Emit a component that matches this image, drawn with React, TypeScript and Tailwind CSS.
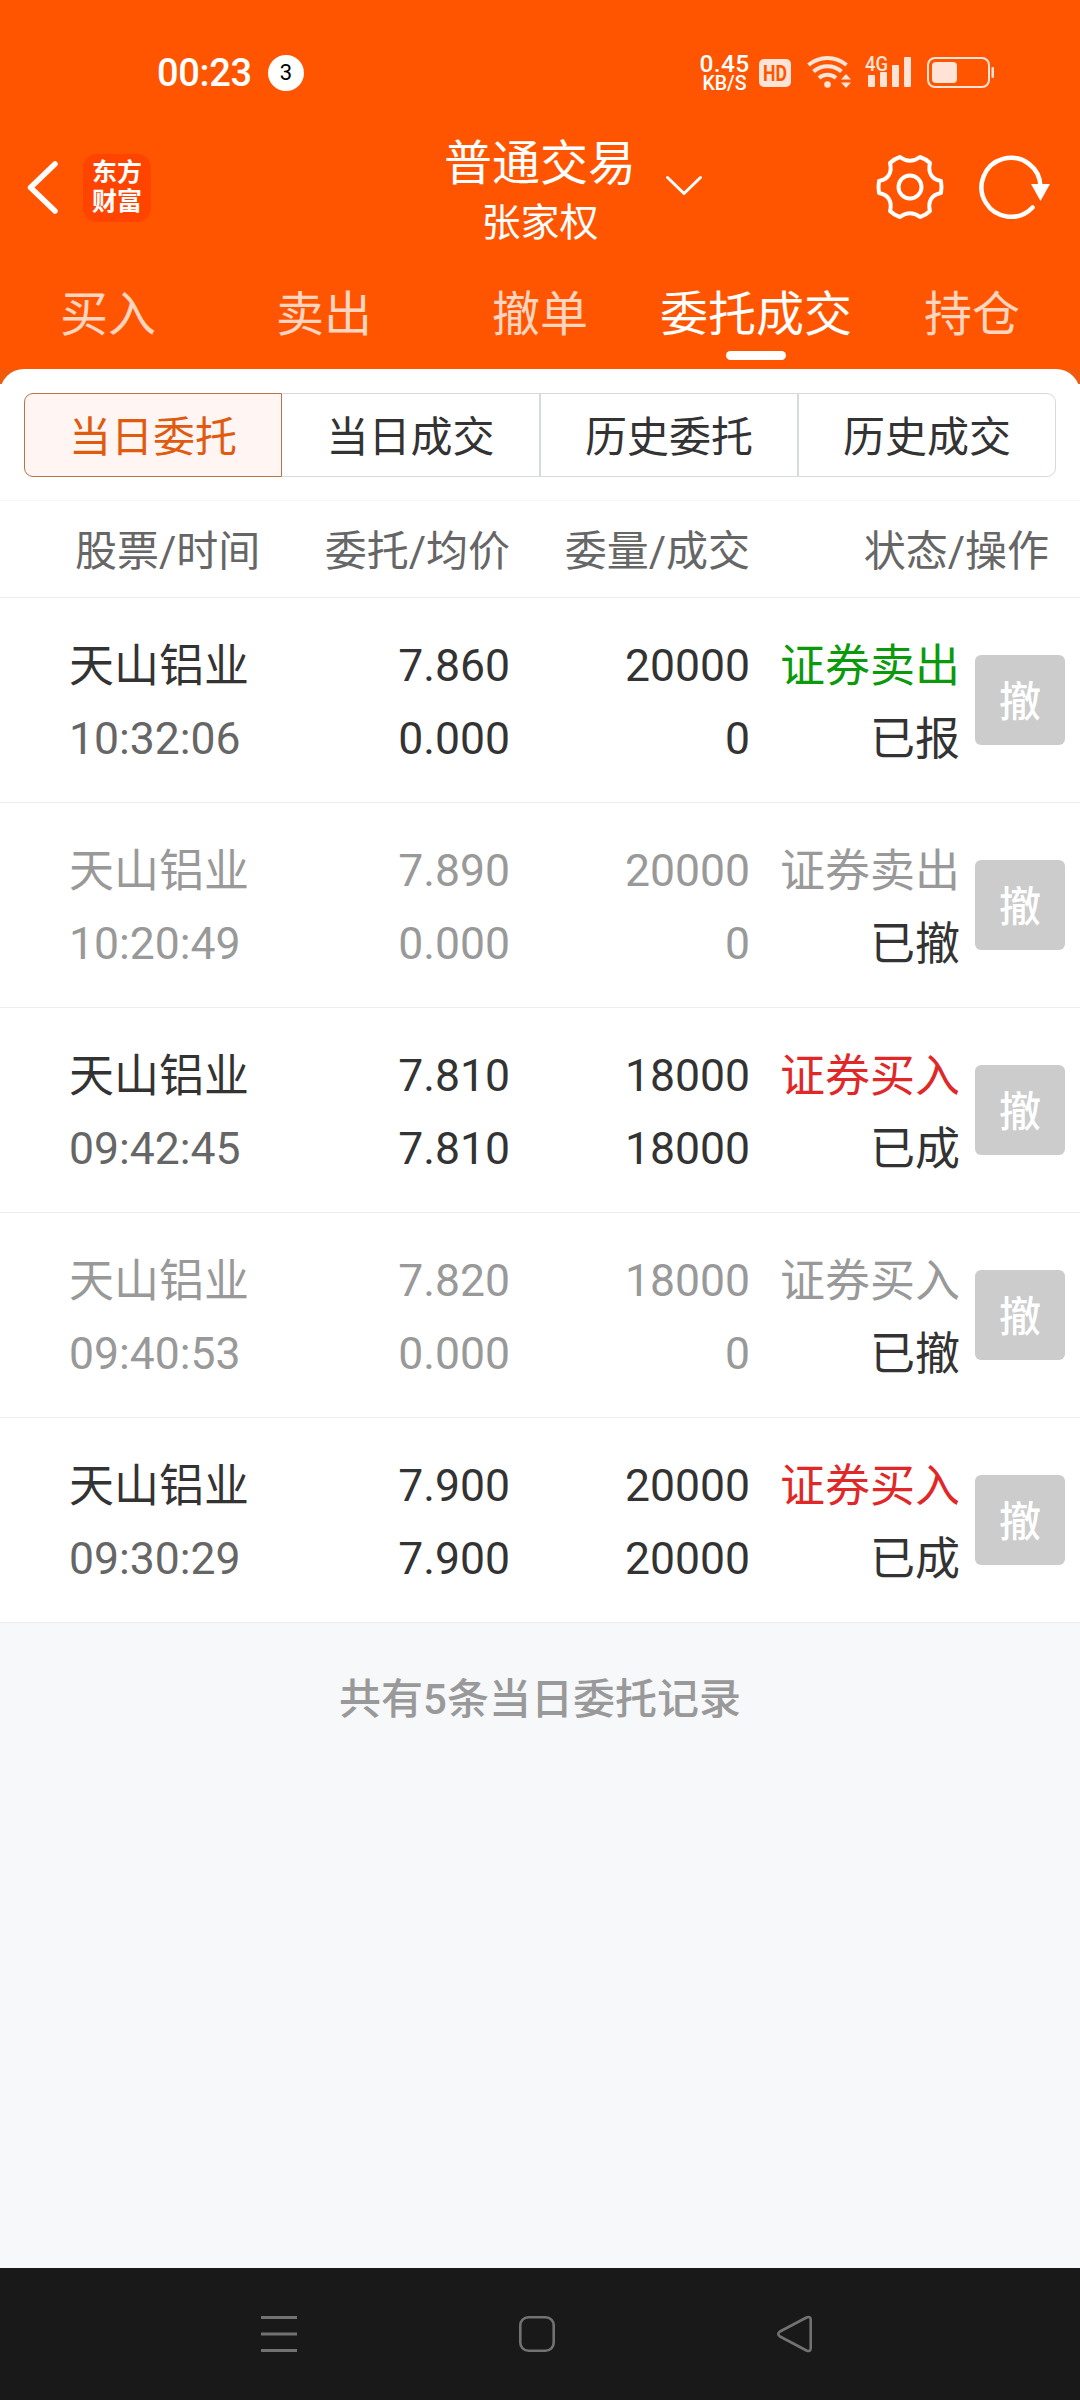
import clsx from 'clsx';

type Order = {
  name: string;
  time: string;
  price: string;
  avg: string;
  amount: string;
  filled: string;
  side: string;
  status: string;
};

const orders: Order[] = [
  { name: '天山铝业', time: '10:32:06', price: '7.860', avg: '0.000', amount: '20000', filled: '0', side: '证券卖出', status: '已报' },
  { name: '天山铝业', time: '10:20:49', price: '7.890', avg: '0.000', amount: '20000', filled: '0', side: '证券卖出', status: '已撤' },
  { name: '天山铝业', time: '09:42:45', price: '7.810', avg: '7.810', amount: '18000', filled: '18000', side: '证券买入', status: '已成' },
  { name: '天山铝业', time: '09:40:53', price: '7.820', avg: '0.000', amount: '18000', filled: '0', side: '证券买入', status: '已撤' },
  { name: '天山铝业', time: '09:30:29', price: '7.900', avg: '7.900', amount: '20000', filled: '20000', side: '证券买入', status: '已成' },
];

const tabs = ['买入', '卖出', '撤单', '委托成交', '持仓'];
const segments = ['当日委托', '当日成交', '历史委托', '历史成交'];

function StatusBar() {
  return (
    <div className="flex h-[130px] items-start justify-between pl-[157px] pr-[82px] pt-[54px]">
      <div className="flex items-center gap-[16px]">
        <span className="text-[38px] leading-[38px] font-medium tracking-[-0.3px]">00:23</span>
        <span className="flex size-[36px] items-center justify-center rounded-full bg-white text-[22px] leading-none text-black">3</span>
      </div>
      <div className="flex items-start">
        <div className="-mt-px flex w-[51px] flex-col items-center font-medium">
          <span className="text-[24.5px] leading-[22px] tracking-[0.3px]">0.45</span>
          <span className="text-[19.5px] leading-[17px]">KB/S</span>
        </div>
        <svg className="-mt-px ml-[2px] h-[40px] w-[246px]" viewBox="0 0 246 40" fill="#ffe3d6">
          {/* HD */}
          <rect x="7" y="6" width="32" height="28" rx="5" />
          <text x="23" y="28" fontSize="22" fontWeight="700" fill="#ff5500" textAnchor="middle" textLength="24" lengthAdjust="spacingAndGlyphs">HD</text>
          {/* wifi */}
          <g fill="none" stroke="#ffe3d6" strokeWidth="4">
            <path d="M56.500 12a29 29 0 0 1 38 0" />
            <path d="M61.500 18.500a21 21 0 0 1 28 0" />
            <path d="M67 25a13 13 0 0 1 17 0" />
          </g>
          <circle cx="75.500" cy="31.500" r="3.300" />
          <path d="M89 26.500l5-5.500 5 5.500zM89 29.500l5 5.500 5-5.500z" />
          {/* signal */}
          <text x="113" y="17.500" fontSize="21" fontWeight="500" textLength="23" lengthAdjust="spacingAndGlyphs">4G</text>
          <rect x="116" y="22" width="7" height="12" rx="1" />
          <rect x="128" y="19" width="7" height="15" rx="1" />
          <rect x="140" y="12" width="7" height="22" rx="1" />
          <rect x="152" y="4" width="7" height="30" rx="1" />
          {/* battery */}
          <rect x="176" y="5" width="61" height="29" rx="7" fill="none" stroke="#ffe3d6" strokeWidth="2" />
          <rect x="180" y="9" width="25" height="21" rx="4" />
          <rect x="239.500" y="14" width="2.500" height="11" rx="1" />
        </svg>
      </div>
    </div>
  );
}

function TitleBar() {
  return (
    <div className="grid h-[124px] grid-cols-[390px_300px_390px]">
      <div className="flex items-start pl-[26px]">
        <svg className="mt-[30px] h-[55px] w-[34px]" viewBox="0 0 34 55" fill="none" stroke="#fff" strokeWidth="5.500" strokeLinecap="round" strokeLinejoin="round">
          <path d="M29 4L4.500 27.500L29 51" />
        </svg>
        <div className="ml-[23px] mt-[24px] flex size-[68px] flex-col items-center justify-center rounded-[14px] bg-[#ff4400] pb-[6px] font-['Noto_Sans_CJK_SC'] text-[25px] leading-[29px] font-bold">
          <span>东方</span>
          <span>财富</span>
        </div>
      </div>
      <div className="flex flex-col items-center pt-px">
        <span className="text-[48px] leading-[65px]">普通交易</span>
        <span className="text-[39px] leading-[54px]">张家权</span>
      </div>
      <div className="flex items-start">
        <svg className="-ml-[26px] mt-[44px] h-[22px] w-[40px]" viewBox="0 0 40 22" fill="none" stroke="#fff" strokeWidth="3" strokeLinecap="round" strokeLinejoin="round">
          <path d="M3.500 3.500L20 19.500L36.500 3.500" />
        </svg>
        <svg className="ml-[170px] mt-[22px] h-[70px] w-[72px]" viewBox="-36 -35 72 70" fill="none" stroke="#fff" strokeWidth="4" strokeLinejoin="round">
          <circle r="11.500" />
          <path d="M-10 -30Q0 -22.500 10 -30Q16 -28 20 -24C17.500 -14 22 -7.500 31 -6Q32 0 31 6C22 7.500 17.500 14 20 24Q16 28 10 30Q0 22.500 -10 30Q-16 28 -20 24C-17.500 14 -22 7.500 -31 6Q-32 0 -31 -6C-22 -7.500 -17.500 -14 -20 -24Q-16 -28 -10 -30Z" />
        </svg>
        <svg className="ml-[29px] mt-[22px] h-[70px] w-[76px]" viewBox="-36 -35 76 70">
          <path d="M21.500 20.500A29.500 29.500 0 1 1 29.500 0" fill="none" stroke="#fff" strokeWidth="4.500" strokeLinecap="round" />
          <path d="M20 -3H39L29.500 14Z" fill="#fff" />
        </svg>
      </div>
    </div>
  );
}

function Tabs() {
  return (
    <div className="grid h-[115px] grid-cols-5 pt-[26px]">
      {tabs.map((tab) => {
        const active = tab === '委托成交';
        return (
          <div key={tab} className={clsx('flex flex-col items-center', active ? 'text-white' : 'text-[#ffd5c0]')}>
            <span className="text-[48px] leading-[70px] whitespace-nowrap">{tab}</span>
            {active && <span className="mt-px h-[9px] w-[60px] rounded-full bg-white" />}
          </div>
        );
      })}
    </div>
  );
}

function Segments() {
  return (
    <div className="mx-[24px] grid h-[84px] grid-cols-4">
      {segments.map((label, i) => (
        <div
          key={label}
          className={clsx(
            'flex items-center justify-center border pt-[5px] text-[42px] leading-none',
            i === 0 ? 'rounded-l-[9px] border-[#b87444] bg-[#fff6f3] text-[#e05a10]' : 'border-[#d6dada] text-[#333333]',
            i === 1 && 'border-l-0',
            i === segments.length - 1 && 'rounded-r-[9px]',
          )}
        >
          {label}
        </div>
      ))}
    </div>
  );
}

const columns = 'grid grid-cols-[270px_240px_240px_210px_120px]';

function OrderRow({ order }: { order: Order }) {
  const cancelled = order.status === '已撤';
  const sideColor = order.side === '证券卖出' ? 'text-[#0b9a0b]' : 'text-[#e02828]';
  return (
    <div className={clsx(columns, 'h-[205px] border-b border-[#ededed] pt-[32px] text-[45px] leading-[73px]', cancelled ? 'text-[#999999]' : 'text-[#333333]')}>
      <div className="pl-[69px]">
        <div>{order.name}</div>
        <div className={clsx('text-[44.5px]', !cancelled && 'text-[#666666]')}>{order.time}</div>
      </div>
      <div className="text-right text-[44.5px]">
        <div>{order.price}</div>
        <div>{order.avg}</div>
      </div>
      <div className="text-right text-[44.5px]">
        <div>{order.amount}</div>
        <div>{order.filled}</div>
      </div>
      <div className="text-right">
        <div className={clsx(!cancelled && sideColor)}>{order.side}</div>
        <div className="text-[#333333]">{order.status}</div>
      </div>
      <div className="pl-[15px] pt-[25px]">
        <button className="flex size-[90px] items-center justify-center rounded-[6px] bg-[#cccccc] pt-[5px] text-[42px] leading-none font-medium text-white">撤</button>
      </div>
    </div>
  );
}

function NavBar() {
  return (
    <div className="flex h-[132px] items-start justify-between bg-[#191919] pl-[259px] pr-[265px] pt-[46px]">
      <svg className="size-[40px]" viewBox="0 0 40 40" stroke="#727272" strokeWidth="3">
        <path d="M2 3.500H38M2 20H38M2 36.500H38" />
      </svg>
      <svg className="size-[40px]" viewBox="0 0 40 40" fill="none" stroke="#727272" strokeWidth="2.600">
        <rect x="3.300" y="3.300" width="33.400" height="33.400" rx="8" />
      </svg>
      <svg className="size-[40px]" viewBox="0 0 40 40" fill="none" stroke="#727272" strokeWidth="2.600" strokeLinejoin="round">
        <path d="M5 17.500L31.500 3.500Q35.500 2 35.700 5.500V34.500Q35.500 38 31.500 36.500L5 22.500Q1.500 20 5 17.500Z" />
      </svg>
    </div>
  );
}

export default function App() {
  return (
    <div className="flex h-[2400px] w-[1080px] flex-col bg-[#f7f8fa] font-['Roboto','Noto_Sans_CJK_SC',sans-serif]">
      <header className="h-[369px] bg-[#ff5500] text-white">
        <StatusBar />
        <TitleBar />
        <Tabs />
      </header>
      <main className="flex-1">
        <div className="bg-linear-to-b from-[#f05a0a] from-[15px] to-white to-[15px]">
          <section className="rounded-t-[24px] bg-white pt-[24px]">
            <Segments />
            <div className={clsx(columns, 'mt-[23px] h-[98px] border-y border-t-[#f7f7f7] border-b-[#ededed] text-[42px] leading-[101px] text-[#666666]')}>
              <div className="pl-[75px]">股票/时间</div>
              <div className="text-right">委托/均价</div>
              <div className="text-right">委量/成交</div>
              <div className="col-span-2 pr-[31px] text-right">状态/操作</div>
            </div>
            {orders.map((order) => (
              <OrderRow key={order.time} order={order} />
            ))}
          </section>
        </div>
        <p className="pt-[47px] text-center text-[42px] leading-[60px] font-medium text-[#999999]">共有5条当日委托记录</p>
      </main>
      <NavBar />
    </div>
  );
}
